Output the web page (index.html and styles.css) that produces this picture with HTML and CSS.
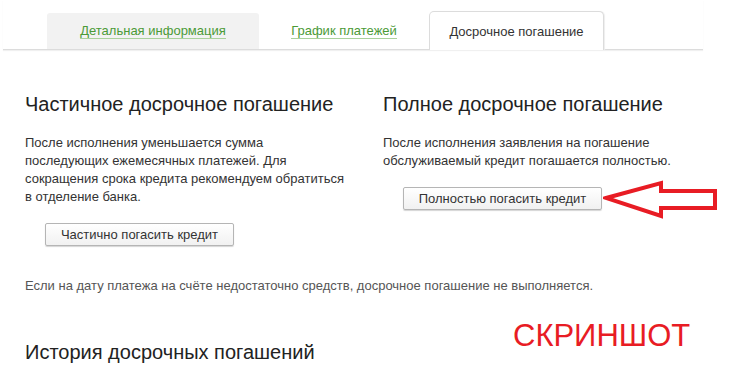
FILE: index.html
```html
<!DOCTYPE html>
<html lang="ru">
<head>
	<meta charset="UTF-8">
	<title>Досрочное погашение</title>
	<link rel="stylesheet" href="styles.css">
</head>
<body>
	<div class="page">
		<ul class="tabs">
			<li class="tab tab-grey"><a href="#">Детальная информация</a></li>
			<li class="tab"><a href="#">График платежей</a></li>
			<li class="tab tab-active">Досрочное погашение</li>
		</ul>

		<div class="cols">
			<div class="col">
				<h2 class="title">Частичное досрочное погашение</h2>
				<p class="text">После исполнения уменьшается сумма последующих ежемесячных платежей. Для сокращения срока кредита рекомендуем обратиться в отделение банка.</p>
				<button class="btn btn-left" type="button">Частично погасить кредит</button>
			</div>
			<div class="col">
				<h2 class="title">Полное досрочное погашение</h2>
				<p class="text">После исполнения заявления на погашение обслуживаемый кредит погашается полностью.</p>
				<button class="btn btn-right" type="button">Полностью погасить кредит</button>
			</div>
		</div>

		<p class="note">Если на дату платежа на счёте недостаточно средств, досрочное погашение не выполняется.</p>

		<h3 class="history">История досрочных погашений</h3>

		<!-- пометки поверх скриншота -->
		<svg class="arrow" width="120" height="40" viewBox="0 0 120 40">
			<polygon points="3,18 58,3 58,11 112,11 112,28 58,28 58,36" fill="none" stroke="#e81c24" stroke-width="4" stroke-linejoin="miter"/>
		</svg>
		<div class="stamp">СКРИНШОТ</div>
	</div>
</body>
</html>
```

FILE: styles.css
```css
body {
  margin: 0;
  background: #fff;
  font-family: "Liberation Sans", Arial, sans-serif;
  color: #333;
}

.page {
  position: relative;
  width: 737px;
  height: 384px;
  overflow: hidden;
}

/* вкладки */
.tabs {
  display: flex;
  align-items: flex-end;
  margin: 0 34px 0 3px;
  padding: 0 0 0 44px;
  list-style: none;
  height: 49px;
  border-bottom: 1px solid #dcdcdc;
  box-shadow: 0 1px 1px #f0f0f0;
}
.tab {
  height: 36px;
  line-height: 36px;
  font-size: 13px;
  text-align: center;
  color: #333;
}
.tab:nth-child(1) { width: 212px; }
.tab:nth-child(2) { width: 170px; }
.tab-grey {
  background: #f2f2f2;
  border-radius: 3px 3px 0 0;
}
.tab a {
  color: #4b9a37;
  text-decoration: none;
  border-bottom: 1px solid #a9d19b;
}
.tab-active {
  width: 173px;
  height: 38px;
  line-height: 40px;
  margin-bottom: -1px;
  background: #fff;
  border: 1px solid #dcdcdc;
  border-bottom: none;
  border-radius: 5px 5px 0 0;
  box-shadow: 1px 0 1px #eee;
}

/* колонки */
.cols {
  display: grid;
  grid-template-columns: 320px 320px;
  column-gap: 38px;
  padding: 42px 0 0 25px;
}
.title {
  margin: 0;
  font-size: 20px;
  line-height: 24px;
  font-weight: normal;
  color: #222;
}
.text {
  margin: 18px 0 0;
  font-size: 13px;
  line-height: 18px;
  color: #333;
}
.btn {
  display: block;
  margin-top: 17px;
  height: 23px;
  padding: 0;
  white-space: nowrap;
  font-family: inherit;
  font-size: 13px;
  color: #333;
  background: linear-gradient(#ffffff, #f1f1f1);
  border: 1px solid #b5b5b5;
  border-radius: 2px;
  box-shadow: 0 1px 1px #d5d5d5;
}
.btn-left { margin-left: 20px; width: 189px; }
.btn-right { margin-left: 20px; width: 199px; }

.note {
  margin: 30px 0 0 25px;
  font-size: 13px;
  line-height: 19px;
  color: #555;
}
.history {
  margin: 45px 0 0 25px;
  font-size: 20px;
  line-height: 24px;
  font-weight: normal;
  color: #222;
}

/* пометки */
.arrow {
  position: absolute;
  left: 603px;
  top: 180px;
}
.stamp {
  position: absolute;
  left: 513px;
  top: 318px;
  font-size: 31px;
  line-height: 36px;
  color: #e81c24;
}
```
